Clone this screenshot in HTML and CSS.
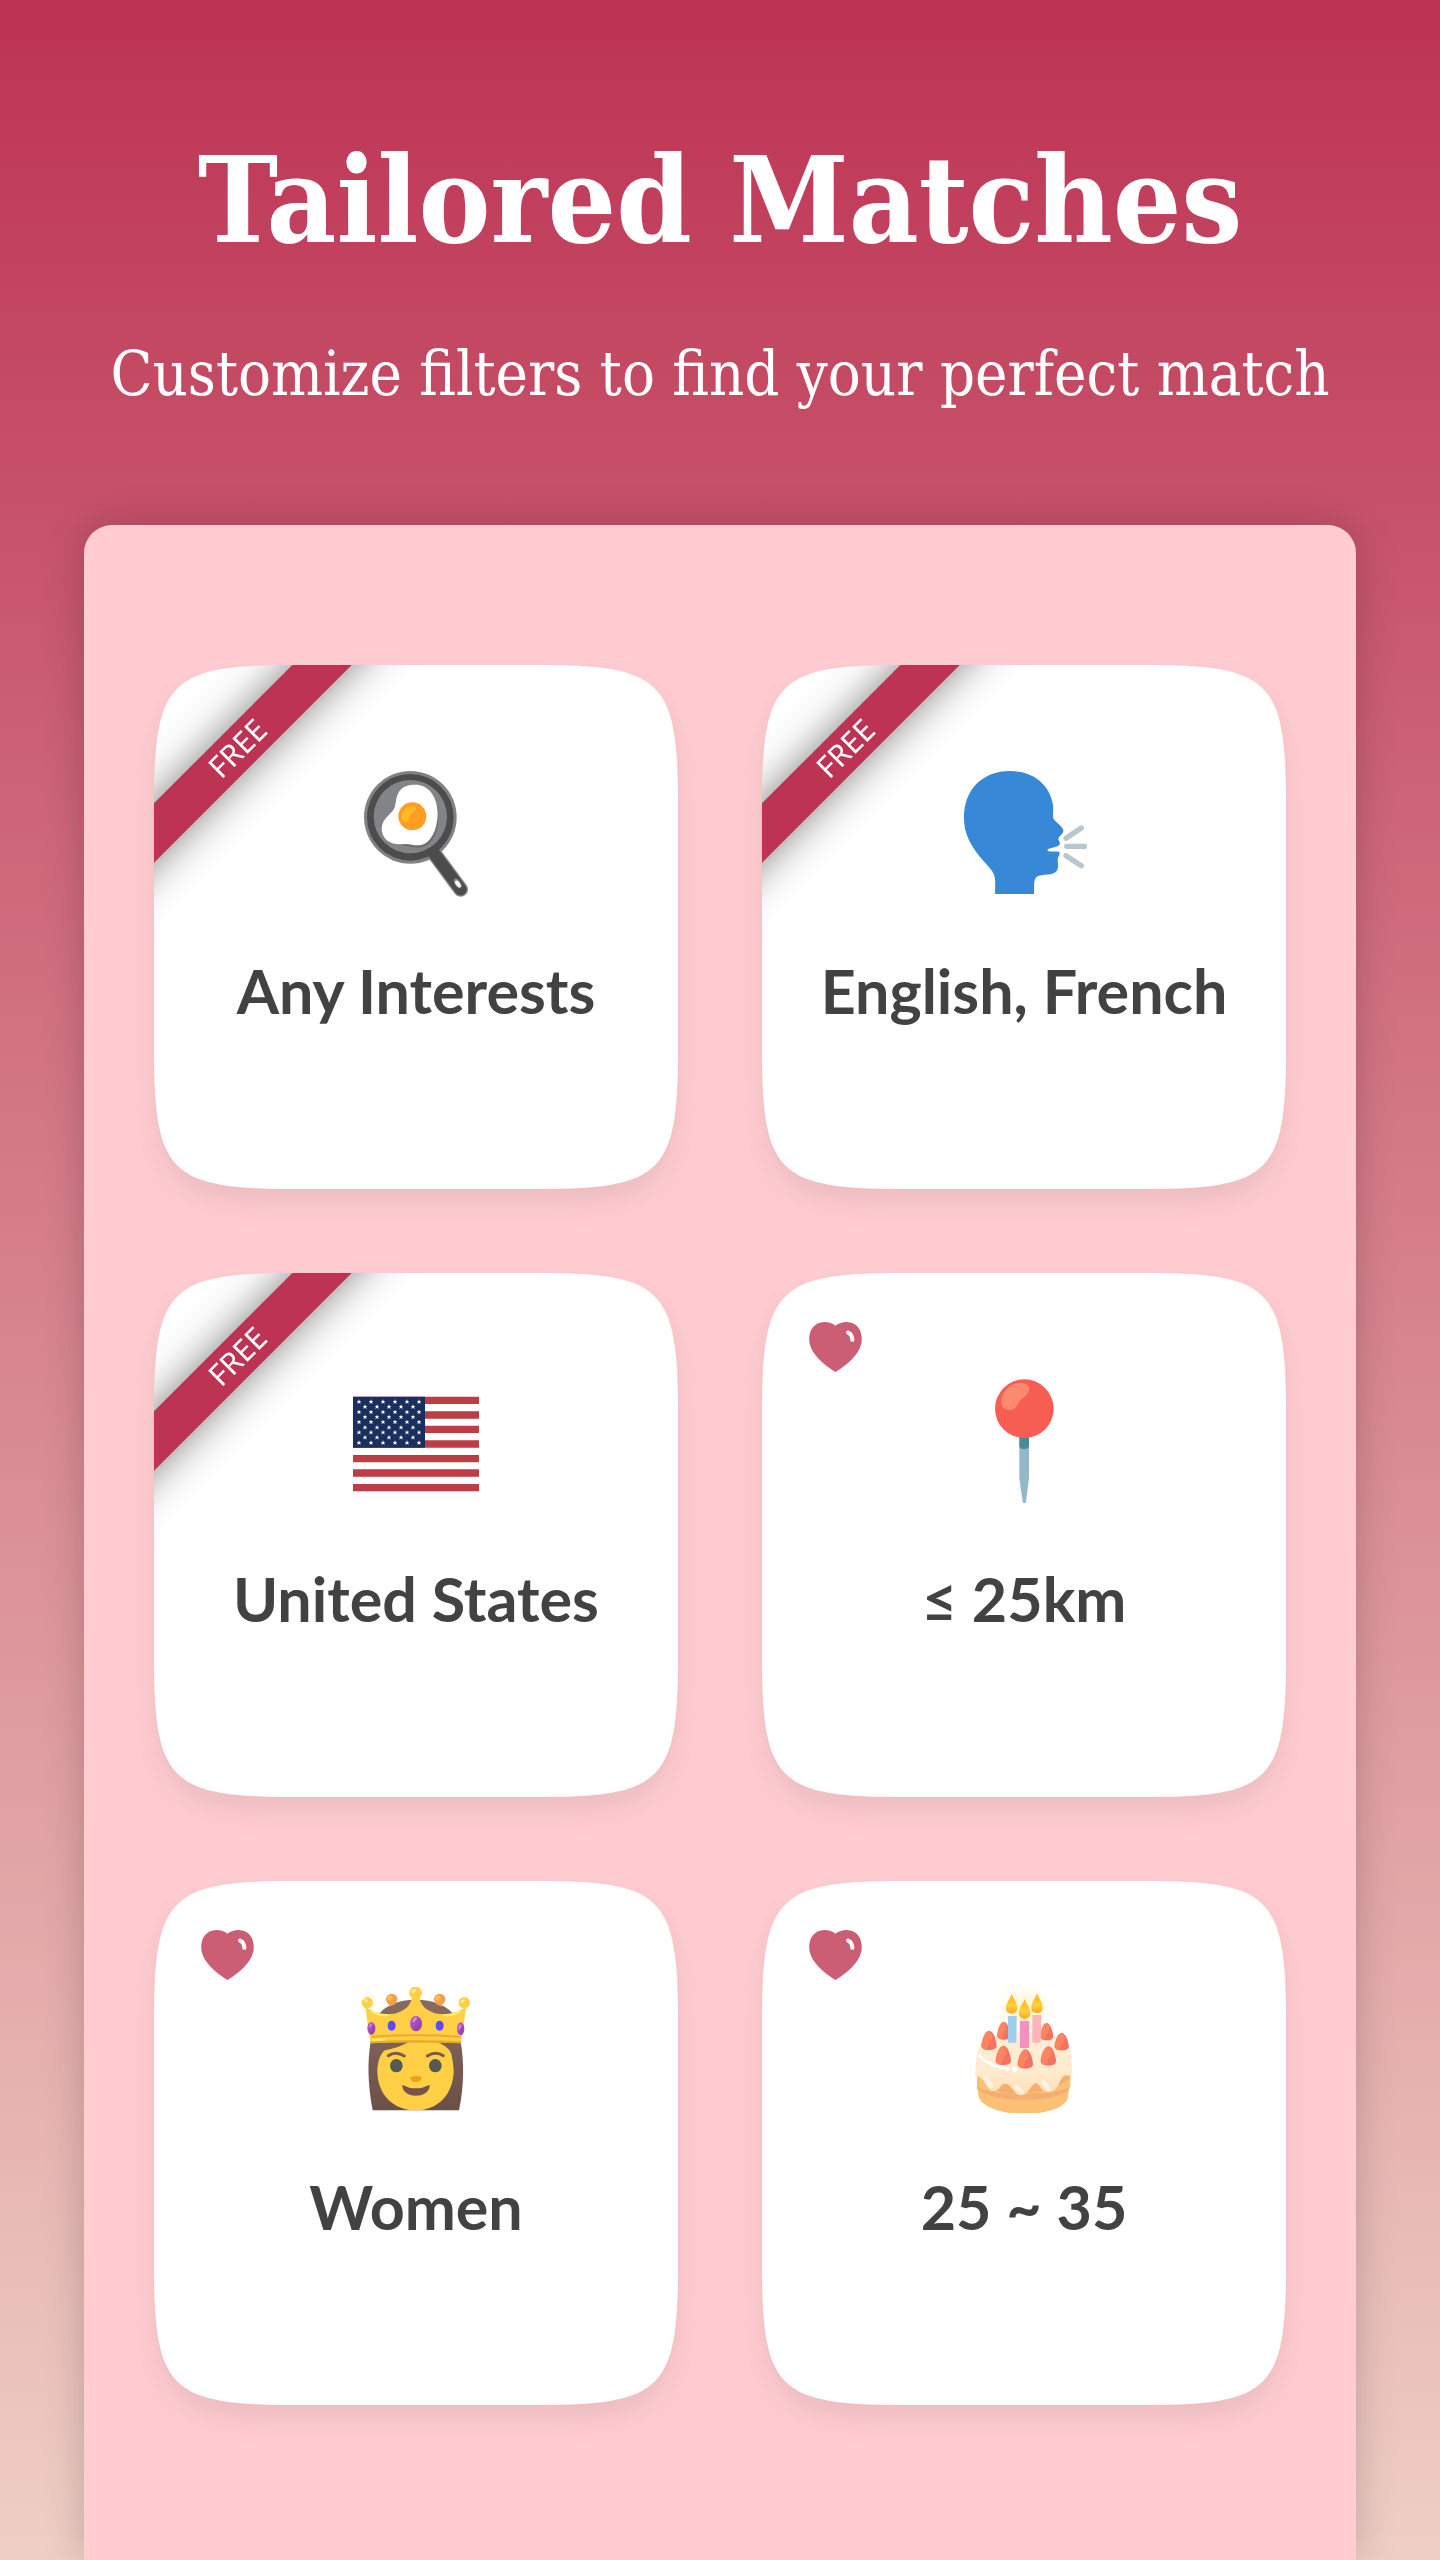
FILE: index.html
```html
<!DOCTYPE html>
<html lang="en">
<head>
    <meta charset="UTF-8">
    <meta name="viewport" content="width=device-width, initial-scale=1.0">
    <title>Tailored Matches</title>

    <link rel="stylesheet" href="styles.css">
</head>
<body>
    <!-- shared shapes -->
    <svg class="defs" width="0" height="0" aria-hidden="true">
        <defs>
            <clipPath id="squircle" clipPathUnits="objectBoundingBox">
                <path d="M0 .267C0 .03 .03 0 .267 0H.733C.97 0 1 .03 1 .267V.733C1 .97 .97 1 .733 1H.267C.03 1 0 .97 0 .733Z"/>
            </clipPath>
            <symbol id="heart" viewBox="178 186 158 151">
                <path fill="#cb5d75" d="M257 197C240 184 214 182 196 195C180 207 175 230 179 252C187 286 222 316 257 337C292 316 327 286 335 252C339 230 334 207 318 195C300 182 274 184 257 197Z"/>
                <path fill="none" stroke="#fff" stroke-width="12" stroke-linecap="round" d="M295 218Q307 223 308 240"/>
            </symbol>
        </defs>
    </svg>

    <header class="header">
        <h1>Tailored Matches</h1>
        <p>Customize filters to find your perfect match</p>
    </header>

    <main class="panel">
        <button class="card" type="button">
            <span class="card__body">
                <span class="ribbon">FREE</span>
                <svg class="card__icon" viewBox="39 63 378 378" aria-hidden="true">
                    <path stroke="#858585" stroke-width="44" stroke-linecap="round" d="M276 302L362 418"/>
                    <circle cx="211" cy="202" r="139" fill="#828282"/>
                    <path stroke="#4c4c4c" stroke-width="36" stroke-linecap="round" d="M276 302L362 418"/>
                    <circle cx="211" cy="202" r="130" fill="#4c4c4c"/>
                    <circle cx="211" cy="200" r="110" fill="#828487"/>
                    <path fill="#6b6e73" d="M290 160C308 230 280 292 235 294L180 285Z"/>
                    <path fill="#fff" d="M225 104C262 103 292 135 293 190C293 238 272 284 238 286C222 287 208 280 192 282C152 287 124 268 125 234C127 204 156 192 163 175C169 160 166 142 178 124C188 109 205 104 225 104Z"/>
                    <circle cx="217" cy="199" r="42" fill="#ff9e22"/>
                    <path fill="#ffbc22" d="M202 214C194 219 184 213 185 199C187 181 199 169 216 168C228 168 231 179 222 184C205 190 211 207 202 214Z"/>
                    <ellipse cx="353" cy="400" rx="9" ry="17" fill="#858585" transform="rotate(-34 353 400)"/>
                    <ellipse cx="354" cy="402" rx="6" ry="12" fill="#fff" transform="rotate(-34 354 402)"/>
                </svg>
                <span class="card__label">Any Interests</span>
            </span>
        </button>

        <button class="card" type="button">
            <span class="card__body">
                <span class="ribbon">FREE</span>
                <svg class="card__icon" viewBox="63 63 378 378" aria-hidden="true">
                    <path fill="#3888d8" d="M210 63C285 63 331 109 339 165C341 184 337 197 341 208C351 219 365 228 370 240C372 253 353 259 355 268C360 277 362 284 355 287C344 293 322 294 322 301C324 309 353 301 358 306C362 314 352 322 353 331C354 345 357 358 346 367C330 379 295 370 287 384C280 396 283 413 282 432H165C165 407 169 383 158 366C143 342 114 321 91 278C77 252 72 229 72 205C71 120 126 63 210 63Z"/>
                    <path fill="none" stroke="#b9c6cd" stroke-width="16" stroke-linecap="round" d="M378 265L424 234M380 289H434M378 317L424 347"/>
                </svg>
                <span class="card__label">English, French</span>
            </span>
        </button>

        <button class="card" type="button">
            <span class="card__body">
                <span class="ribbon">FREE</span>
                <svg class="card__icon" viewBox="39 -3 378 378" aria-hidden="true">
                    <defs>
                        <path id="star" fill="#fff" d="M0 -7L2 -2L7 -2L3 1L5 7L0 3L-5 7L-3 1L-7 -2L-2 -2Z"/>
                        <g id="stars">
                            <use href="#star" x="0"/>
                            <use href="#star" x="36"/>
                            <use href="#star" x="72"/>
                            <use href="#star" x="108"/>
                            <use href="#star" x="144"/>
                        </g>
                    </defs>
                    <path stroke="#bc3d44" stroke-width="22" d="M39 61H417M39 105H417M39 148H417M39 192H417M39 236H417M39 279H417M39 323H417"/>
                    <path fill="#1a2f5d" d="M39 50H255V203H39Z"/>
                    <use href="#stars" x="57" y="65"/><use href="#star" x="237" y="65"/>
                    <use href="#stars" x="75" y="80"/>
                    <use href="#stars" x="57" y="96"/><use href="#star" x="237" y="96"/>
                    <use href="#stars" x="75" y="111"/>
                    <use href="#stars" x="57" y="126"/><use href="#star" x="237" y="126"/>
                    <use href="#stars" x="75" y="142"/>
                    <use href="#stars" x="57" y="157"/><use href="#star" x="237" y="157"/>
                    <use href="#stars" x="75" y="172"/>
                    <use href="#stars" x="57" y="188"/><use href="#star" x="237" y="188"/>
                </svg>
                <span class="card__label">United States</span>
            </span>
        </button>

        <button class="card" type="button">
            <span class="card__body">
                <svg class="card__heart" aria-hidden="true"><use href="#heart"/></svg>
                <svg class="card__icon" viewBox="-27 57 378 378" aria-hidden="true">
                    <path fill="#94b8c9" d="M148 230H177V355L168 426Q163 434 158 426L148 355Z"/>
                    <path fill="#4b8a98" d="M148 230H177V258Q176 267 163 267Q149 267 148 258Z"/>
                    <circle cx="163" cy="146" r="88" fill="#f75e53"/>
                    <path fill="#ff896e" d="M96 134C87 112 109 78 140 70C164 64 181 77 177 92C173 106 155 112 144 132C135 149 126 151 115 150C104 149 98 142 96 134Z"/>
                </svg>
                <span class="card__label">≤ 25km</span>
            </span>
        </button>

        <button class="card" type="button">
            <span class="card__body">
                <svg class="card__heart" aria-hidden="true"><use href="#heart"/></svg>
                <svg class="card__icon" viewBox="9 51 378 378" aria-hidden="true">
                    <defs>
                        <linearGradient id="hair" x1="0" x2="0" y1="0" y2="1">
                            <stop offset="0" stop-color="#87695f"/>
                            <stop offset="1" stop-color="#6c5048"/>
                        </linearGradient>
                        <linearGradient id="gem" x1="0" x2="1" y1="0" y2="1">
                            <stop offset="0" stop-color="#c261cc"/>
                            <stop offset="1" stop-color="#8738a8"/>
                        </linearGradient>
                    </defs>
                    <path fill="url(#hair)" d="M90 128C116 101 152 89 197 89C242 89 281 102 307 128L332 215C342 270 343 345 327 421H68C53 345 52 270 62 215Z"/>
                    <path fill="#ffd045" d="M197 421C132 421 84 376 82 306C82 272 94 247 105 241C133 235 155 228 175 217H263C287 227 300 240 304 251C307 270 311 284 311 306C308 376 262 421 197 421Z"/>
                    <g fill="#f2a048">
                        <circle cx="125" cy="88" r="17"/>
                        <circle cx="269" cy="88" r="17"/>
                        <path d="M117 98H135L140 128H120ZM259 98H277L274 128H254Z"/>
                    </g>
                    <g fill="#ffbd60">
                        <circle cx="120" cy="84" r="8"/>
                        <circle cx="264" cy="84" r="8"/>
                    </g>
                    <path fill="#87695f" d="M92 128C110 111 136 100 181 91V120L140 134ZM303 128C285 111 258 100 212 91V120L254 134Z"/>
                    <path fill="#ffd045" d="M45 108C86 143 174 145 187 80H207C220 145 308 143 349 108L333 220Q197 213 62 220Z"/>
                    <g fill="#ffd045">
                        <circle cx="197" cy="69" r="19"/>
                        <circle cx="52" cy="98" r="17"/>
                        <circle cx="343" cy="98" r="17"/>
                    </g>
                    <path fill="none" stroke="#fff07e" stroke-width="6" stroke-linecap="round" d="M66 124Q87 137 112 136M329 124Q308 137 283 136"/>
                    <g fill="#ffee8b">
                        <ellipse cx="191" cy="63" rx="8" ry="5" transform="rotate(-35 191 63)"/>
                        <ellipse cx="47" cy="91" rx="8" ry="4" transform="rotate(35 47 91)"/>
                        <ellipse cx="338" cy="93" rx="8" ry="4" transform="rotate(-40 338 93)"/>
                    </g>
                    <path fill="none" stroke="#f5a52c" stroke-width="6" d="M65 200Q197 192 331 200"/>
                    <path fill="none" stroke="#e5ab22" stroke-width="6" d="M63 217Q197 211 333 217"/>
                    <path stroke="#fff07e" stroke-width="6" stroke-linecap="round" d="M70 211L103 208"/>
                    <g fill="url(#gem)">
                        <ellipse cx="198" cy="161" rx="18" ry="23"/>
                        <ellipse cx="64" cy="175" rx="12" ry="19"/>
                        <ellipse cx="332" cy="176" rx="11" ry="19"/>
                    </g>
                    <g fill="#703cff">
                        <ellipse cx="125" cy="167" rx="12" ry="15"/>
                        <ellipse cx="269" cy="167" rx="12" ry="15"/>
                    </g>
                    <g fill="#405eef">
                        <ellipse cx="121" cy="169" rx="7" ry="10"/>
                        <ellipse cx="265" cy="169" rx="7" ry="10"/>
                    </g>
                    <path fill="#d696df" d="M188 153Q191 143 200 142Q202 151 188 157ZM59 169Q59 162 66 160Q67 168 59 174ZM325 176Q327 165 334 162Q335 171 325 181Z"/>
                    <path fill="none" stroke="#7d5a43" stroke-width="9" stroke-linecap="round" d="M115 257Q137 242 163 258M232 258Q257 242 280 257"/>
                    <g fill="#555853">
                        <ellipse cx="139" cy="287" rx="19" ry="20"/>
                        <ellipse cx="256" cy="287" rx="19" ry="20"/>
                    </g>
                    <path fill="#e8a31d" d="M181 321Q197 315 214 321Q216 336 197 336Q179 336 181 321Z"/>
                    <path fill="#795548" d="M157 350C154 341 168 350 178 353Q197 357 217 353C227 350 242 341 239 350C233 386 163 386 157 350Z"/>
                </svg>
                <span class="card__label">Women</span>
            </span>
        </button>

        <button class="card" type="button">
            <span class="card__body">
                <svg class="card__heart" aria-hidden="true"><use href="#heart"/></svg>
                <svg class="card__icon" viewBox="3 21 378 378" aria-hidden="true">
                    <defs>
                        <linearGradient id="cream" x1="0" x2="0" y1="0" y2="1">
                            <stop offset="0" stop-color="#ffeed5"/>
                            <stop offset=".6" stop-color="#fdebd0"/>
                            <stop offset="1" stop-color="#ffdfb5"/>
                        </linearGradient>
                        <linearGradient id="flame-fill" x1="0" x2="0" y1="0" y2="1">
                            <stop offset="0" stop-color="#ffb322"/>
                            <stop offset=".6" stop-color="#ffd03a"/>
                            <stop offset="1" stop-color="#ffa724"/>
                        </linearGradient>
                        <radialGradient id="glow">
                            <stop offset="0" stop-color="#ffe9a8" stop-opacity=".8"/>
                            <stop offset="1" stop-color="#fff6d8" stop-opacity="0"/>
                        </radialGradient>
                        <path id="flame" fill="url(#flame-fill)" d="M0 -35C7 -18 17 -8 17 8C17 19 10 24 0 24C-10 24 -17 19 -17 8C-17 -8 -6 -18 0 -35Z"/>
                        <g id="berry">
                            <path fill="#f17362" d="M0 -29C15 -29 23 5 23 16C23 25 13 29 0 29C-14 29 -23 24 -23 16C-23 4 -14 -29 0 -29Z"/>
                            <path fill="#ff8460" d="M-2 -28C12 -23 13 -4 3 4C-7 12 0 24 -10 27C-20 24 -22 20 -21 13C-20 -2 -11 -25 -2 -28Z"/>
                        </g>
                    </defs>
                    <circle cx="193" cy="95" r="95" fill="url(#glow)"/>
                    <path fill="#fbc073" d="M51 285L55 345C60 382 130 402 191 402C252 402 319 385 324 351L331 285Z"/>
                    <path fill="#f3ae70" d="M51 305V325C83 371 301 371 328 325L331 290Z"/>
                    <path fill="#fbc073" d="M51 290C90 330 127 343 191 339C260 336 310 315 331 290V320C290 348 80 348 52 320Z"/>
                    <path fill="url(#cream)" d="M46 282C46 260 50 225 55 205C62 175 125 155 191 155C257 155 323 172 330 205C335 229 337 260 335 292C323 276 310 283 301 303C291 326 280 337 264 336C242 334 238 309 227 310C213 311 207 344 185 346C163 347 155 313 137 311C122 309 119 333 100 333C76 333 70 278 46 290Z"/>
                    <path fill="none" stroke="#fff" stroke-width="9" stroke-linecap="round" d="M58 227Q88 259 144 266"/>
                    <circle cx="165" cy="268" r="8" fill="#fff"/>
                    <path fill="none" stroke="#fff3e5" stroke-width="12" stroke-linecap="round" d="M75 292L94 320M169 322L185 336M251 306L266 328"/>
                    <use href="#berry" transform="translate(131 152) scale(.85 .93)"/>
                    <use href="#berry" transform="translate(260 155) scale(.85 .9)"/>
                    <use href="#berry" x="87" y="181"/>
                    <use href="#berry" transform="translate(305 185) scale(.93 .9)"/>
                    <use href="#berry" x="130" y="226"/>
                    <use href="#berry" x="265" y="228"/>
                    <path fill="#a0ceee" d="M144 108H170L169 188H144Z"/>
                    <path fill="#f191bd" d="M180 123H208L207 204H180Z"/>
                    <path fill="#ffb4b8" d="M217 105H244L242 188H217Z"/>
                    <use href="#berry" x="196" y="237"/>
                    <use href="#flame" x="155" y="77"/>
                    <use href="#flame" x="194" y="92"/>
                    <use href="#flame" x="231" y="75"/>
                </svg>
                <span class="card__label">25 ~ 35</span>
            </span>
        </button>
    </main>
</body>
</html>
```

FILE: styles.css
```css
* {
    box-sizing: border-box;
}

body {
    margin: 0;
    padding: 116px 84px 0;
    min-height: 100vh;
    display: flex;
    flex-direction: column;
    background: linear-gradient(#bd3353, #efcfc5);
    font-family: Lato, "Open Sans", sans-serif;
}

.defs {
    position: absolute;
}

.header {
    color: white;
    text-align: center;
    font-family: "Roboto Slab", "DejaVu Serif Condensed", "DejaVu Serif", serif;
    margin: 0 -84px;
}

.header h1 {
    margin: 0;
    font-size: 120px;
    line-height: 168px;
    font-weight: bold;
}

.header p {
    margin: 50px 0 0;
    font-size: 61px;
    line-height: 80px;
}

.panel {
    flex: 1;
    margin-top: 111px;
    padding: 140px 70px 155px;
    display: grid;
    grid-template-columns: 1fr 1fr;
    align-content: start;
    gap: 84px;
    background: #ffccd1;
    border-radius: 28px 28px 0 0;
    box-shadow: 0 0 42px rgba(0, 0, 0, 0.2);
}

.card {
    border: 0;
    padding: 0;
    background: none;
    font: inherit;
    color: #424242;
    aspect-ratio: 1;
    cursor: pointer;
    filter: drop-shadow(0 14px 14px rgba(0, 0, 0, 0.08));
}

.card__body {
    position: relative;
    display: flex;
    flex-direction: column;
    align-items: center;
    height: 100%;
    padding-top: 106px;
    background: white;
    clip-path: url(#squircle);
}

.card__icon {
    width: 126px;
    height: 126px;
}

.card__heart {
    position: absolute;
    left: 47px;
    top: 49px;
    width: 53px;
    height: 50px;
}

.card__label {
    margin-top: 54px;
    font-size: 61px;
    line-height: 80px;
    font-weight: bold;
}

.ribbon {
    position: absolute;
    left: -116px;
    top: 63px;
    width: 400px;
    height: 42px;
    line-height: 40px;
    text-align: center;
    font-family: "Noto Sans", sans-serif;
    font-size: 30px;
    color: white;
    background: #bd3353;
    box-shadow: 0 0 42px rgba(0, 0, 0, 0.5);
    transform: rotate(-45deg);
}
```
